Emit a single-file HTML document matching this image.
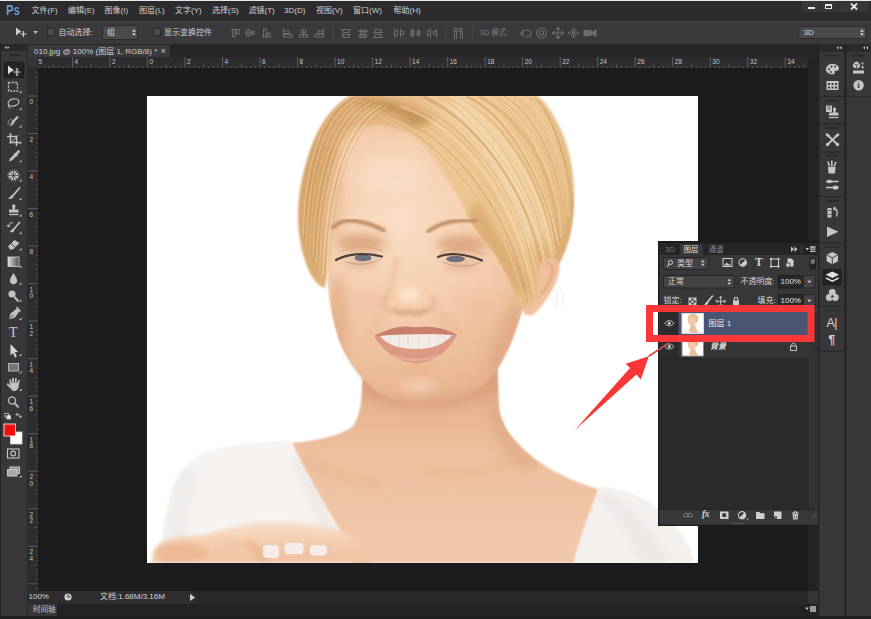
<!DOCTYPE html>
<html lang="zh">
<head>
<meta charset="utf-8">
<title>Photoshop</title>
<style>
html,body{margin:0;padding:0;background:#1c1b1e;}
body{width:871px;height:619px;position:relative;overflow:hidden;font-family:"Liberation Sans","Noto Sans CJK SC",sans-serif;font-size:8px;color:#d6d6d6;}
.abs{position:absolute;}
#menubar{left:0;top:0;width:871px;height:21px;background:#2c2b2d;}
#topline{left:0;top:0;width:871px;height:1px;background:#e9e9e9;}
#optbar{left:0;top:21px;width:871px;height:23px;background:#3a393b;border-top:1px solid #444345;box-sizing:border-box;}
#tools{left:0;top:44px;width:28px;height:575px;background:#38373a;}
#tabbar{left:28px;top:44px;width:790px;height:13px;background:#262527;}
#tab{left:28px;top:44.5px;width:142px;height:13px;background:#3a393b;}
#hruler{left:28px;top:57px;width:780px;height:11px;background:#2c2b2e;}
#vruler{left:28px;top:68px;width:10px;height:523px;background:#2c2b2e;}
#canvas{left:38px;top:68px;width:770px;height:523px;background:#1c1b1e;}
#vscroll{left:808px;top:57px;width:10px;height:534px;background:#232225;}
#status{left:28px;top:591px;width:780px;height:12px;background:#282729;}
#statusl{left:28px;top:591px;width:169px;height:12px;background:#2e2d30;}
#corner{left:808px;top:591px;width:10px;height:12px;background:#363537;}
#timeline{left:28px;top:603px;width:790px;height:13px;background:#232224;border-top:1px solid #2f2e30;box-sizing:border-box;}
#tltab{left:28px;top:603.5px;width:29px;height:12px;background:#363538;}
#bottom{left:0;top:615.5px;width:871px;height:3.5px;background:#1e1d1f;z-index:5;}
#dock1{left:818px;top:44px;width:28px;height:575px;background:#38373a;}
#dock2{left:846px;top:44px;width:25px;height:575px;background:#38373a;border-left:1px solid #29282a;box-sizing:border-box;}
#photo{left:147px;top:96px;width:551px;height:467px;background:#fff;overflow:hidden;}
#layers{left:658px;top:241px;width:160px;height:284px;background:#2c2b2e;border:1px solid #1a191b;box-sizing:border-box;}
.t{position:absolute;white-space:nowrap;line-height:1;}
.m{top:7px;font-size:8px;color:#d2d2d2;}
.o{top:7px;font-size:8px;color:#d2d2d2;}
.cb{width:8px;height:8px;background:#4d4c4f;border:1px solid #2a292b;box-sizing:border-box;border-radius:1px;}
.dd{background:#4a494c;border:1px solid #2a292b;box-sizing:border-box;border-radius:2px;}
</style>
</head>
<body>
<div class="abs" id="canvas"></div>
<div class="abs" id="photo">
<svg class="abs" style="left:0;top:0" width="551" height="467" viewBox="147 96 551 467">
<defs>
<filter id="b05" x="-10%" y="-10%" width="120%" height="120%"><feGaussianBlur stdDeviation="0.6"/></filter>
<filter id="b1" x="-10%" y="-10%" width="120%" height="120%"><feGaussianBlur stdDeviation="1.2"/></filter>
<filter id="b2" x="-20%" y="-20%" width="140%" height="140%"><feGaussianBlur stdDeviation="2"/></filter>
<filter id="b3" x="-20%" y="-20%" width="140%" height="140%"><feGaussianBlur stdDeviation="3.5"/></filter>
<filter id="b6" x="-30%" y="-30%" width="160%" height="160%"><feGaussianBlur stdDeviation="6"/></filter>
<filter id="b10" x="-50%" y="-50%" width="200%" height="200%"><feGaussianBlur stdDeviation="10"/></filter>
<linearGradient id="hairg" gradientUnits="userSpaceOnUse" x1="300" y1="150" x2="575" y2="230">
<stop offset="0" stop-color="#d5a26b"/><stop offset="0.14" stop-color="#dcad77"/><stop offset="0.45" stop-color="#ecc692"/><stop offset="0.75" stop-color="#ebc590"/><stop offset="1" stop-color="#e3b882"/>
</linearGradient>
<radialGradient id="faceg" gradientUnits="userSpaceOnUse" cx="400" cy="220" r="200">
<stop offset="0" stop-color="#fadec5"/><stop offset="0.5" stop-color="#f3ccac"/><stop offset="0.85" stop-color="#e9b793"/><stop offset="1" stop-color="#dfa680"/>
</radialGradient>
<linearGradient id="handg" gradientUnits="userSpaceOnUse" x1="0" y1="522" x2="0" y2="563">
<stop offset="0" stop-color="#f8e0cc"/><stop offset="0.45" stop-color="#f4ceb0"/><stop offset="1" stop-color="#efc2a1"/>
</linearGradient>
<linearGradient id="neckg" gradientUnits="userSpaceOnUse" x1="0" y1="380" x2="0" y2="563">
<stop offset="0" stop-color="#dda680"/><stop offset="0.15" stop-color="#e6b48f"/><stop offset="0.4" stop-color="#edc09f"/><stop offset="1" stop-color="#f1c9ab"/>
</linearGradient>
<path id="facep" d="M392 126 C380 123 362 124 352 130 C342 137 335 155 331 175 C326 205 324 245 327 270 C328 290 330 305 333 318 C337 338 344 354 353 367 C360 377 370 388 385 396 C400 403 420 405 440 403 C458 401 474 393 485 384 C494 376 502 362 508 350 C516 332 521 315 524 303 C528 285 530 262 527 245 L470 150 Z"/>
<clipPath id="facec"><use href="#facep"/></clipPath>
<path id="neckp" d="M363 368 C362 395 362 415 352 427 C338 437 312 441 292 443 C305 470 325 505 342 534 L353 563 L573 563 L580 540 C586 520 594 503 598 489 C580 484 552 472 535 459 C515 443 502 428 499 408 L497 362 Z"/>
<clipPath id="neckc"><use href="#neckp"/></clipPath>
<path id="hairback" d="M349 96 C333 106 321 122 313 142 C304 165 298 192 298 215 C298 240 304 262 311 275 C316 283 321 288 325 288 L340 190 L380 125 L430 170 L500 200 L520 290 C535 285 548 275 556 269 C566 254 574 230 574 200 C575 170 568 140 555 118 C550 108 544 101 538 96 Z"/>
<path id="sweep" d="M378 121 C390 124 405 130 419 141 C428 149 434 157 438 164 C445 176 450 183 454 189 C460 199 464 208 467 216 C476 232 486 243 495 254 C503 268 510 281 514 292 C516 300 518 307 523 309 C529 308 535 300 540 290 C546 279 550 270 554 260 C560 245 562 220 562 190 C562 150 550 115 530 96 L352 96 C362 104 370 114 378 121 Z"/>
<clipPath id="hairc"><use href="#hairback"/><use href="#sweep"/></clipPath>
</defs>
<rect x="147" y="96" width="551" height="467" fill="#ffffff"/>
<g filter="url(#b1)">
<path d="M290 441 C260 442 225 444 200 455 C178 466 168 495 163 530 L160 563 L360 563 L342 534 Z" fill="#f6f3f1"/>
<path d="M598 487 C620 486 645 497 662 512 C680 528 690 545 695 563 L570 563 L578 545 Z" fill="#f3f0ee"/>
</g>
<g filter="url(#b3)" opacity="0.7">
<path d="M600 492 C625 500 650 520 668 563 L640 563 C630 530 615 510 598 500 Z" fill="#e9e5e3"/>
<path d="M180 470 C170 500 166 530 165 563 L185 563 C185 530 190 500 200 470 Z" fill="#ebe8e6"/>
<path d="M300 455 C310 480 325 510 345 545 L335 550 C315 515 300 485 290 460 Z" fill="#e9e4e1"/>
</g>
<g filter="url(#b1)"><use href="#neckp" fill="url(#neckg)"/></g>
<g clip-path="url(#neckc)">
<g filter="url(#b6)">
<path d="M360 392 C390 414 450 418 505 386 L505 365 L360 365 Z" fill="#d99f79" opacity="0.8"/>
<path d="M500 400 C505 430 520 450 545 465 L520 470 C500 450 490 430 488 400 Z" fill="#dca37e" opacity="0.6"/>
<path d="M302 460 C322 472 348 481 384 485" stroke="#dba680" stroke-width="5" fill="none" opacity="0.55"/>
<path d="M420 470 C450 478 480 475 520 462" stroke="#e3ad89" stroke-width="6" fill="none" opacity="0.5"/>
</g>
</g>
<g filter="url(#b1)"><use href="#hairback" fill="url(#hairg)"/></g>
<path d="M520 262 C535 250 556 250 558 266 C559 282 548 300 536 312 C530 318 524 316 522 310 Z" fill="#f0c19e" filter="url(#b1)"/>
<path d="M543 262 C553 259 556 270 549 283 C546 290 542 294 538 297" stroke="#e5a47a" stroke-width="3" fill="none" filter="url(#b1)" opacity="0.8"/>
<g filter="url(#b1)"><use href="#facep" fill="url(#faceg)"/></g>
<g clip-path="url(#facec)">
<g filter="url(#b6)" opacity="0.55">
<ellipse cx="338" cy="320" rx="10" ry="45" fill="#dca079"/>
<ellipse cx="508" cy="335" rx="12" ry="40" fill="#dca079" transform="rotate(22 508 335)"/>
<ellipse cx="425" cy="404" rx="55" ry="7" fill="#dba07a"/>
<ellipse cx="362" cy="243" rx="26" ry="9" fill="#d9a07a"/>
<ellipse cx="462" cy="245" rx="26" ry="9" fill="#d9a07a"/>
<ellipse cx="335" cy="200" rx="8" ry="40" fill="#e3b088"/>
<ellipse cx="416" cy="371" rx="16" ry="4" fill="#d9a07c"/>
<path d="M385 308 C378 318 372 328 369 340" stroke="#d99f7a" stroke-width="4" fill="none"/>
<path d="M435 308 C444 317 454 326 461 338" stroke="#d99f7a" stroke-width="4" fill="none"/>
<ellipse cx="418" cy="386" rx="18" ry="7" fill="#fbe0c8"/>
<ellipse cx="392" cy="175" rx="36" ry="20" fill="#fbe1c9"/>
<ellipse cx="368" cy="300" rx="16" ry="12" fill="#efbe9f"/>
<ellipse cx="472" cy="305" rx="18" ry="12" fill="#efbe9f"/>
</g>
</g>
<g filter="url(#b3)" opacity="0.75"><path d="M326 262 C323 225 326 190 334 162 C340 142 350 128 366 124 C378 122 392 124 404 128" stroke="#e3ba86" stroke-width="7" fill="none"/></g>
<g filter="url(#b1)"><use href="#sweep" fill="url(#hairg)"/></g>
<g clip-path="url(#hairc)"><g filter="url(#b3)" opacity="0.55">
<path d="M467 216 C482 240 505 275 520 296 L530 285 C512 255 494 225 478 200 Z" fill="#cf9c5e"/>
<path d="M318 150 C308 180 304 215 310 255 L322 280 C318 240 322 190 340 150 Z" fill="#d2a064"/>
<path d="M540 262 C555 250 566 225 568 195 L576 200 C576 235 566 258 556 272 Z" fill="#d3a467"/>
</g>
<g filter="url(#b3)" opacity="0.8">
<path d="M352 106 C372 105 396 111 414 127 L434 121 C414 105 390 99 358 100 Z" fill="#bd8648"/>
</g>
<g filter="url(#b6)" opacity="0.45">
<path d="M440 105 C480 140 505 185 525 250 L548 235 C530 175 500 135 465 100 Z" fill="#fbecc9"/>
</g>
<g filter="url(#b05)" fill="none" stroke-linecap="round"><path d="M384.0 119.0C438.9 143.7 510.2 213.4 522.0 306.0" stroke="#f9e3bd" stroke-width="1.5" opacity="0.17"/><path d="M385.9 117.1C439.4 138.6 513.1 223.4 525.0 304.4" stroke="#cf9b5f" stroke-width="1.6" opacity="0.40"/><path d="M386.6 116.5C443.2 140.9 504.0 210.1 525.6 303.9" stroke="#f3d6a6" stroke-width="1.5" opacity="0.44"/><path d="M388.7 114.9C455.6 134.3 514.6 220.6 527.3 302.4" stroke="#c38f54" stroke-width="1.4" opacity="0.39"/><path d="M391.9 112.6C453.7 137.2 514.3 207.0 529.4 300.1" stroke="#f6dcb0" stroke-width="0.9" opacity="0.17"/><path d="M394.7 110.7C457.6 132.1 516.7 204.0 531.0 298.0" stroke="#d6a76c" stroke-width="1.6" opacity="0.24"/><path d="M400.5 106.8C462.4 125.4 517.2 201.6 534.0 293.9" stroke="#f9e3bd" stroke-width="2.4" opacity="0.37"/><path d="M400.8 106.6C467.1 123.4 519.0 195.3 534.1 293.7" stroke="#cf9b5f" stroke-width="1.1" opacity="0.30"/><path d="M402.4 105.6C463.4 132.0 518.2 191.2 534.9 292.6" stroke="#f3d6a6" stroke-width="1.4" opacity="0.36"/><path d="M408.4 101.9C466.4 123.6 518.5 185.4 537.5 288.4" stroke="#c38f54" stroke-width="1.7" opacity="0.35"/><path d="M408.5 101.8C468.4 126.4 516.9 188.5 537.5 288.4" stroke="#f6dcb0" stroke-width="1.3" opacity="0.27"/><path d="M415.0 97.0C462.9 118.9 528.4 202.3 540.1 283.9" stroke="#d6a76c" stroke-width="0.9" opacity="0.38"/><path d="M415.1 97.0C466.3 117.8 521.4 203.3 540.1 283.8" stroke="#f9e3bd" stroke-width="1.6" opacity="0.31"/><path d="M422.7 97.0C480.2 124.1 530.6 191.8 542.9 278.7" stroke="#cf9b5f" stroke-width="1.4" opacity="0.42"/><path d="M426.4 97.0C473.3 113.9 532.6 195.1 544.2 276.2" stroke="#f3d6a6" stroke-width="1.7" opacity="0.33"/><path d="M425.6 97.0C470.6 117.4 530.9 187.0 543.9 276.8" stroke="#c38f54" stroke-width="2.5" opacity="0.36"/><path d="M430.4 97.0C482.7 120.7 535.8 177.2 545.5 273.6" stroke="#f6dcb0" stroke-width="2.2" opacity="0.41"/><path d="M435.4 97.0C483.1 116.4 537.3 182.1 547.2 270.2" stroke="#d6a76c" stroke-width="0.9" opacity="0.17"/><path d="M435.2 97.0C479.9 115.6 537.7 197.5 547.1 270.3" stroke="#f9e3bd" stroke-width="1.1" opacity="0.18"/><path d="M439.6 97.0C481.3 122.6 534.4 192.3 548.5 267.4" stroke="#cf9b5f" stroke-width="1.3" opacity="0.25"/><path d="M443.0 97.0C485.0 121.9 532.5 183.6 549.5 265.2" stroke="#f3d6a6" stroke-width="1.7" opacity="0.18"/><path d="M444.8 97.0C489.1 113.9 534.7 190.1 550.1 264.0" stroke="#c38f54" stroke-width="0.8" opacity="0.44"/><path d="M450.9 97.0C491.1 117.1 543.6 179.4 551.9 259.9" stroke="#f6dcb0" stroke-width="2.6" opacity="0.41"/><path d="M455.5 97.0C495.7 114.5 544.1 172.5 553.2 256.9" stroke="#d6a76c" stroke-width="1.8" opacity="0.38"/><path d="M456.7 97.0C496.1 120.1 538.1 170.3 553.5 256.1" stroke="#f9e3bd" stroke-width="2.3" opacity="0.40"/><path d="M462.9 97.0C500.5 115.8 545.2 186.3 555.2 252.1" stroke="#cf9b5f" stroke-width="0.9" opacity="0.23"/><path d="M463.3 97.0C506.0 121.2 544.7 166.5 555.4 251.8" stroke="#f3d6a6" stroke-width="2.6" opacity="0.44"/><path d="M467.6 97.0C503.7 111.9 548.0 180.8 556.5 249.0" stroke="#c38f54" stroke-width="1.9" opacity="0.42"/><path d="M474.3 97.0C511.1 116.5 546.2 180.9 558.3 244.6" stroke="#f6dcb0" stroke-width="2.0" opacity="0.42"/><path d="M477.6 97.0C515.9 114.2 551.5 165.3 559.2 242.5" stroke="#d6a76c" stroke-width="1.4" opacity="0.39"/><path d="M482.5 97.0C515.8 113.0 548.3 165.1 560.4 239.3" stroke="#f9e3bd" stroke-width="1.1" opacity="0.19"/><path d="M480.7 97.0C519.4 117.7 552.7 163.6 560.0 240.5" stroke="#cf9b5f" stroke-width="2.6" opacity="0.35"/><path d="M485.7 97.0C519.4 109.7 555.1 159.3 561.2 237.2" stroke="#f3d6a6" stroke-width="2.0" opacity="0.31"/><path d="M493.3 97.0C523.5 117.3 552.9 171.5 563.1 232.3" stroke="#c38f54" stroke-width="1.3" opacity="0.24"/><path d="M492.4 97.0C524.1 110.7 554.9 173.3 562.9 232.9" stroke="#f6dcb0" stroke-width="2.4" opacity="0.26"/><path d="M497.6 97.0C527.5 117.2 556.6 156.9 564.2 229.6" stroke="#d6a76c" stroke-width="1.7" opacity="0.31"/><path d="M501.8 97.0C526.0 112.0 559.2 172.3 565.2 226.9" stroke="#f9e3bd" stroke-width="2.2" opacity="0.20"/><path d="M505.2 97.0C533.6 112.9 559.5 161.8 566.0 224.7" stroke="#cf9b5f" stroke-width="1.8" opacity="0.39"/><path d="M506.5 97.0C533.2 109.7 560.2 156.9 566.3 223.9" stroke="#f3d6a6" stroke-width="1.7" opacity="0.32"/><path d="M514.7 97.0C540.9 111.0 561.3 158.9 568.2 218.6" stroke="#c38f54" stroke-width="1.7" opacity="0.36"/><path d="M516.4 97.0C539.6 111.2 560.5 155.1 568.6 217.5" stroke="#f6dcb0" stroke-width="2.4" opacity="0.43"/><path d="M518.9 97.0C541.4 115.5 561.8 163.7 569.2 215.9" stroke="#d6a76c" stroke-width="1.0" opacity="0.28"/><path d="M521.5 97.0C541.2 107.1 563.3 152.1 569.8 214.3" stroke="#f9e3bd" stroke-width="2.4" opacity="0.20"/><path d="M529.8 97.0C549.0 107.2 565.3 146.8 571.6 209.0" stroke="#cf9b5f" stroke-width="1.2" opacity="0.44"/><path d="M531.4 97.0C549.2 114.7 566.0 158.8 572.0 207.9" stroke="#f3d6a6" stroke-width="1.6" opacity="0.30"/><path d="M534.9 97.0C550.2 108.5 567.5 159.8 572.8 205.7" stroke="#c38f54" stroke-width="1.8" opacity="0.28"/><path d="M388.0 108.0C352.0 125.7 331.0 187.6 328.0 285.0" stroke="#cf9b5f" stroke-width="1.0" opacity="0.28"/><path d="M385.6 107.3C350.0 124.7 329.3 185.7 326.3 281.7" stroke="#f3d6a6" stroke-width="1.6" opacity="0.33"/><path d="M383.2 106.5C348.1 123.7 327.6 183.8 324.7 278.3" stroke="#c38f54" stroke-width="1.1" opacity="0.45"/><path d="M380.8 105.8C346.1 122.7 325.9 181.9 323.0 275.0" stroke="#f6dcb0" stroke-width="1.8" opacity="0.44"/><path d="M378.4 105.1C344.2 121.7 324.2 180.0 321.3 271.7" stroke="#d6a76c" stroke-width="1.1" opacity="0.27"/><path d="M376.0 104.3C342.2 120.7 322.5 178.1 319.7 268.3" stroke="#f9e3bd" stroke-width="1.0" opacity="0.39"/><path d="M373.6 103.6C340.2 119.7 320.8 176.2 318.0 265.0" stroke="#cf9b5f" stroke-width="1.3" opacity="0.23"/><path d="M371.2 102.9C338.3 118.7 319.1 174.3 316.3 261.7" stroke="#f3d6a6" stroke-width="1.4" opacity="0.43"/><path d="M368.8 102.1C336.3 117.8 317.4 172.4 314.7 258.3" stroke="#c38f54" stroke-width="1.8" opacity="0.26"/><path d="M366.4 101.4C334.4 116.8 315.7 170.5 313.0 255.0" stroke="#f6dcb0" stroke-width="1.1" opacity="0.43"/><path d="M364.0 100.7C332.4 115.8 314.0 168.6 311.3 251.7" stroke="#d6a76c" stroke-width="1.6" opacity="0.38"/><path d="M361.6 99.9C330.4 114.8 312.3 166.7 309.7 248.3" stroke="#f9e3bd" stroke-width="1.1" opacity="0.21"/><path d="M359.2 99.2C328.5 113.8 310.6 164.8 308.0 245.0" stroke="#cf9b5f" stroke-width="1.7" opacity="0.31"/><path d="M356.8 98.5C326.5 112.8 308.9 162.9 306.3 241.7" stroke="#f3d6a6" stroke-width="1.1" opacity="0.43"/><path d="M354.4 97.7C324.6 111.8 307.2 161.0 304.7 238.3" stroke="#c38f54" stroke-width="1.6" opacity="0.40"/><path d="M352.0 97.0C322.6 110.8 305.4 159.1 303.0 235.0" stroke="#f6dcb0" stroke-width="1.1" opacity="0.41"/></g>
</g>
<g filter="url(#b1)"><path d="M540 264 C546 255 559 256 559 267 C559 279 551 291 542 299 C537 300 536 290 538 280 Z" fill="#f0bf9c"/><path d="M546 264 C553 262 555 270 550 280 C547 287 544 291 541 294" stroke="#e3a077" stroke-width="2.500" fill="none" opacity="0.800"/></g>
<g filter="url(#b05)" fill="none" stroke="#efe3d0" stroke-width="0.8" opacity="0.8"><path d="M556 282 C562 290 565 298 563 306"/><path d="M553 284 C558 293 559 302 556 309"/></g>
<g filter="url(#b3)" opacity="0.5"><ellipse cx="361" cy="243" rx="22" ry="7" fill="#d39a72"/><ellipse cx="461" cy="244" rx="22" ry="7" fill="#d39a72"/><ellipse cx="362" cy="264" rx="17" ry="3.500" fill="#c99274"/><ellipse cx="461" cy="266" rx="17" ry="3.500" fill="#c99274"/></g>
<g filter="url(#b1)" fill="none" stroke="#bf9066" stroke-linecap="round">
<path d="M333 227 C340 221 348 219.500 356 221 C366 222.500 376 226 384 230.500" stroke-width="4"/>
<path d="M428 231.500 C436 226 444 222.500 452 221.500 C460 220.500 468 220 476 220.500" stroke-width="3.800"/>
</g>
<g filter="url(#b05)" fill="none">
<path d="M341 252 C352 245.500 370 245.500 383 251.500" stroke="#d6a682" stroke-width="1"/>
<path d="M440 253 C452 247 470 247.500 484 255" stroke="#d6a682" stroke-width="1"/>
<ellipse cx="363" cy="258" rx="9" ry="3.300" fill="#6d6f7b"/>
<ellipse cx="455.500" cy="259" rx="9.500" ry="3.300" fill="#6d6f7b"/>
<path d="M347 259.500 C350 258 353 257.500 355 258 M371 258.500 C375 258 378 258 381 257.500" stroke="#d8ccc8" stroke-width="1.600"/>
<path d="M336 260 C346 254 364 252 382 256.500" stroke="#4d3d38" stroke-width="2.200" stroke-linecap="round"/>
<path d="M438 257 C448 252.500 464 253 482 260.500" stroke="#4d3d38" stroke-width="2.200" stroke-linecap="round"/>
<path d="M345 261.500 C355 265.500 370 265 381 259" stroke="#b98f76" stroke-width="0.900" opacity="0.800"/>
<path d="M443 262 C455 267.500 470 267.500 481 262" stroke="#b98f76" stroke-width="0.900" opacity="0.800"/>
</g>
<g filter="url(#b2)" fill="none">
<path d="M393 309 C399 315 405 313 410 312 C415 314 421 315 428 309" stroke="#c58a69" stroke-width="3" opacity="0.850"/>
<path d="M386 295 C381 302 384 309 391 311" stroke="#dba480" stroke-width="2.200" opacity="0.800"/>
<path d="M432 295 C437 302 434 309 427 311" stroke="#dba480" stroke-width="2.200" opacity="0.800"/>
<path d="M397 258 C393 278 389 290 386 300" stroke="#e5b593" stroke-width="4" opacity="0.600"/>
<ellipse cx="409" cy="295" rx="10" ry="8" fill="#fde8d3" opacity="0.700"/>
</g>
<g filter="url(#b05)">
<path d="M374 336 C388 329 402 325 410 327 C414 328 418 327 422 327 C436 326 448 330 457 335 C449 351 434 363 416 363 C398 363 383 351 374 336 Z" fill="#dc9a85"/>
<path d="M380 336 C395 334 435 334 452 335 C445 344 432 349 416 349 C400 349 387 345 380 336 Z" fill="#f4ece6"/>
<path d="M390 335V344M399 335V347M408 335V348.500M419 335V348.500M429 335V347.500M438 335V345M445 335V341" stroke="#e3d6cf" stroke-width="0.700" fill="none"/>
<path d="M374 336 C388 329 402 325 410 327 C414 328 418 327 422 327 C436 326 448 330 457 335 C440 333 392 334 374 336 Z" fill="#c8806c"/>
<path d="M392 356 C405 361 428 361 440 355" stroke="#e9b5a3" stroke-width="2.500" fill="none" opacity="0.700"/>
</g>
<g filter="url(#b2)">
<path d="M152 563 L154 550 C158 540 175 536 200 536 C215 533 235 525 257 522.500 C285 521 320 524 340 531 C358 538 368 550 374 563 Z" fill="url(#handg)"/>
<ellipse cx="182" cy="553" rx="27" ry="10" fill="#ecba96"/>
<path d="M250 540 C262 545 266 552 268 563 L258 563 C256 555 250 548 240 545 Z" fill="#e9b792" opacity="0.700"/>
<path d="M225 545 C240 538 250 545 262 560" stroke="#ecbd9c" stroke-width="3" fill="none" opacity="0.7"/>
<path d="M282 540V563M307 540V563M330 542V563" stroke="#eab997" stroke-width="2" opacity="0.6"/>
</g>
<g filter="url(#b05)" fill="#f8ecea">
<rect x="263" y="545" width="16" height="13" rx="4"/>
<rect x="284.500" y="543" width="19" height="11" rx="4"/>
<rect x="310" y="545" width="17" height="10.500" rx="4"/>
</g>
</svg>
</div>
<div class="abs" id="tabbar"></div>
<div class="abs" id="tab"><span class="t" style="left:6px;top:3px;font-size:8px;color:#d0d0d0;">010.jpg @ 100% (图层 1, RGB/8) *</span><span class="t" style="left:132.5px;top:1.5px;font-size:9.5px;color:#d0d0d0;">×</span></div>
<svg class="abs" id="hruler" width="780" height="11" viewBox="28 57 780 11" style="left:28px;top:57px;"><rect x="28" y="57" width="780" height="11" fill="#2d2c2f"/><rect x="28" y="57" width="10" height="11" fill="#353437"/><path d="M39.6 66V68M44.3 66V68M49.0 66V68M58.4 66V68M63.1 66V68M67.8 66V68M77.1 66V68M81.8 66V68M86.5 66V68M95.9 66V68M100.6 66V68M105.3 66V68M114.7 66V68M119.4 66V68M124.0 66V68M133.4 66V68M138.1 66V68M142.8 66V68M152.2 66V68M156.9 66V68M161.6 66V68M170.9 66V68M175.6 66V68M180.3 66V68M189.7 66V68M194.4 66V68M199.1 66V68M208.5 66V68M213.2 66V68M217.9 66V68M227.2 66V68M231.9 66V68M236.6 66V68M246.0 66V68M250.7 66V68M255.4 66V68M264.8 66V68M269.4 66V68M274.1 66V68M283.5 66V68M288.2 66V68M292.9 66V68M302.3 66V68M307.0 66V68M311.6 66V68M321.0 66V68M325.7 66V68M330.4 66V68M339.8 66V68M344.5 66V68M349.2 66V68M358.6 66V68M363.2 66V68M367.9 66V68M377.3 66V68M382.0 66V68M386.7 66V68M396.1 66V68M400.8 66V68M405.5 66V68M414.8 66V68M419.5 66V68M424.2 66V68M433.6 66V68M438.3 66V68M443.0 66V68M452.4 66V68M457.0 66V68M461.7 66V68M471.1 66V68M475.8 66V68M480.5 66V68M489.9 66V68M494.6 66V68M499.3 66V68M508.6 66V68M513.3 66V68M518.0 66V68M527.4 66V68M532.1 66V68M536.8 66V68M546.2 66V68M550.8 66V68M555.5 66V68M564.9 66V68M569.6 66V68M574.3 66V68M583.7 66V68M588.4 66V68M593.0 66V68M602.4 66V68M607.1 66V68M611.8 66V68M621.2 66V68M625.9 66V68M630.6 66V68M640.0 66V68M644.6 66V68M649.3 66V68M658.7 66V68M663.4 66V68M668.1 66V68M677.5 66V68M682.2 66V68M686.9 66V68M696.2 66V68M700.9 66V68M705.6 66V68M715.0 66V68M719.7 66V68M724.4 66V68M733.8 66V68M738.4 66V68M743.1 66V68M752.5 66V68M757.2 66V68M761.9 66V68M771.3 66V68M776.0 66V68M780.7 66V68M790.0 66V68M794.7 66V68M799.4 66V68" stroke="#68676b" stroke-width="0.8" fill="none"/><path d="M53.7 64.5V68M91.2 64.5V68M128.7 64.5V68M166.3 64.5V68M203.8 64.5V68M241.3 64.5V68M278.8 64.5V68M316.3 64.5V68M353.9 64.5V68M391.4 64.5V68M428.9 64.5V68M466.4 64.5V68M503.9 64.5V68M541.5 64.5V68M579.0 64.5V68M616.5 64.5V68M654.0 64.5V68M691.5 64.5V68M729.1 64.5V68M766.6 64.5V68M804.1 64.5V68" stroke="#68676b" stroke-width="0.8" fill="none"/><path d="M72.5 57V68M110.0 57V68M147.5 57V68M185.0 57V68M222.5 57V68M260.1 57V68M297.6 57V68M335.1 57V68M372.6 57V68M410.1 57V68M447.7 57V68M485.2 57V68M522.7 57V68M560.2 57V68M597.7 57V68M635.3 57V68M672.8 57V68M710.3 57V68M747.8 57V68M785.3 57V68" stroke="#6a696d" stroke-width="0.8" fill="none"/><g font-family="Liberation Sans, sans-serif" font-size="6.5" fill="#c4c4c4"><text x="38.5" y="64">5</text><text x="74.5" y="64">4</text><text x="112.0" y="64">2</text><text x="149.5" y="64">0</text><text x="187.0" y="64">2</text><text x="224.5" y="64">4</text><text x="262.1" y="64">6</text><text x="299.6" y="64">8</text><text x="337.1" y="64">10</text><text x="374.6" y="64">12</text><text x="412.1" y="64">14</text><text x="449.7" y="64">16</text><text x="487.2" y="64">18</text><text x="524.7" y="64">20</text><text x="562.2" y="64">22</text><text x="599.7" y="64">24</text><text x="637.3" y="64">26</text><text x="674.8" y="64">28</text><text x="712.3" y="64">30</text><text x="749.8" y="64">32</text><text x="787.3" y="64">34</text></g></svg>
<svg class="abs" id="vruler" width="10" height="523" viewBox="28 68 10 523" style="left:28px;top:68px;"><rect x="28" y="68" width="10" height="523" fill="#2d2c2f"/><path d="M36 72.5H38M36 81.9H38M36 86.6H38M36 91.3H38M36 100.7H38M36 105.4H38M36 110.1H38M36 119.5H38M36 124.1H38M36 128.8H38M36 138.2H38M36 142.9H38M36 147.6H38M36 157.0H38M36 161.7H38M36 166.4H38M36 175.7H38M36 180.4H38M36 185.1H38M36 194.5H38M36 199.2H38M36 203.9H38M36 213.2H38M36 217.9H38M36 222.6H38M36 232.0H38M36 236.7H38M36 241.4H38M36 250.8H38M36 255.5H38M36 260.1H38M36 269.5H38M36 274.2H38M36 278.9H38M36 288.3H38M36 293.0H38M36 297.7H38M36 307.1H38M36 311.7H38M36 316.4H38M36 325.8H38M36 330.5H38M36 335.2H38M36 344.6H38M36 349.3H38M36 354.0H38M36 363.3H38M36 368.0H38M36 372.7H38M36 382.1H38M36 386.8H38M36 391.5H38M36 400.9H38M36 405.5H38M36 410.2H38M36 419.6H38M36 424.3H38M36 429.0H38M36 438.4H38M36 443.1H38M36 447.8H38M36 457.1H38M36 461.8H38M36 466.5H38M36 475.9H38M36 480.6H38M36 485.3H38M36 494.7H38M36 499.3H38M36 504.0H38M36 513.4H38M36 518.1H38M36 522.8H38M36 532.2H38M36 536.9H38M36 541.5H38M36 550.9H38M36 555.6H38M36 560.3H38M36 569.7H38M36 574.4H38M36 579.1H38M36 588.5H38" stroke="#555458" stroke-width="0.8" fill="none"/><path d="M34.5 77.2H38M34.5 114.8H38M34.5 152.3H38M34.5 189.8H38M34.5 227.3H38M34.5 264.8H38M34.5 302.4H38M34.5 339.9H38M34.5 377.4H38M34.5 414.9H38M34.5 452.4H38M34.5 490.0H38M34.5 527.5H38M34.5 565.0H38" stroke="#555458" stroke-width="0.8" fill="none"/><path d="M28 96.0H38M28 133.5H38M28 171.0H38M28 208.6H38M28 246.1H38M28 283.6H38M28 321.1H38M28 358.6H38M28 396.2H38M28 433.7H38M28 471.2H38M28 508.7H38M28 546.2H38M28 583.8H38" stroke="#6a696d" stroke-width="0.8" fill="none"/><g font-family="Liberation Sans, sans-serif" font-size="6.5" fill="#c4c4c4"><text x="29.500" y="104.0">0</text><text x="29.500" y="141.5">2</text><text x="29.500" y="179.0">4</text><text x="29.500" y="216.6">6</text><text x="29.500" y="254.1">8</text><text x="29.500" y="291.6">1</text><text x="29.500" y="298.1">0</text><text x="29.500" y="329.1">1</text><text x="29.500" y="335.6">2</text><text x="29.500" y="366.6">1</text><text x="29.500" y="373.1">4</text><text x="29.500" y="404.2">1</text><text x="29.500" y="410.7">6</text><text x="29.500" y="441.7">1</text><text x="29.500" y="448.2">8</text><text x="29.500" y="479.2">2</text><text x="29.500" y="485.7">0</text><text x="29.500" y="516.7">2</text><text x="29.500" y="523.2">2</text><text x="29.500" y="554.2">2</text><text x="29.500" y="560.7">4</text></g></svg>
<div class="abs" id="vscroll"></div>
<div class="abs" id="status"></div>
<div class="abs" id="statusl"><span class="t" style="left:0.5px;top:2px;font-size:8px;color:#d6d6d6;">100%</span><svg class="abs" style="left:36px;top:2px" width="8" height="8" viewBox="0 0 8 8"><circle cx="4" cy="4" r="3.6" fill="#c9c9c9"/><path d="M4 4V1.500M4 4H6" stroke="#3a393b" stroke-width="1" fill="none"/></svg><span class="t" style="left:72px;top:2px;font-size:8px;color:#d6d6d6;">文档:1.68M/3.16M</span><svg class="abs" style="left:162px;top:2.500px" width="5" height="7" viewBox="0 0 5 7"><path d="M0 0L5 3.500L0 7Z" fill="#d0d0d0"/></svg></div>
<div class="abs" id="corner"></div>
<div class="abs" id="timeline"></div>
<div class="abs" id="tltab"><span class="t" style="left:5px;top:2px;font-size:7.5px;color:#c8c8c8;">时间轴</span></div>
<svg class="abs" style="left:805px;top:606px" width="12" height="6" viewBox="0 0 12 6"><path d="M0 1.500L4 1.500L2 4Z" fill="#bdbdbd"/><rect x="5" y="0" width="6" height="6" fill="#9c9c9c"/></svg>
<div class="abs" id="bottom"></div>
<div class="abs" id="menubar">
<span class="t" style="left:5.5px;top:2.5px;font-size:14.5px;font-weight:bold;color:#6f9bd3;transform:scaleX(0.78);transform-origin:0 0;">Ps</span>
<span class="t m" style="left:31.5px;">文件(F)</span>
<span class="t m" style="left:68px;">编辑(E)</span>
<span class="t m" style="left:104.5px;">图像(I)</span>
<span class="t m" style="left:139px;">图层(L)</span>
<span class="t m" style="left:175px;">文字(Y)</span>
<span class="t m" style="left:212px;">选择(S)</span>
<span class="t m" style="left:248.5px;">滤镜(T)</span>
<span class="t m" style="left:284px;">3D(D)</span>
<span class="t m" style="left:316px;">视图(V)</span>
<span class="t m" style="left:353px;">窗口(W)</span>
<span class="t m" style="left:393.5px;">帮助(H)</span>
<div class="abs" style="left:801.5px;top:1px;width:67.5px;height:10.5px;background:#373638;border-radius:0 0 2px 2px;"></div>
<div class="abs" style="left:819.5px;top:1px;width:1px;height:10.5px;background:#2b2a2c;"></div>
<div class="abs" style="left:837.5px;top:1px;width:1px;height:10.5px;background:#2b2a2c;"></div>
<div class="abs" style="left:807.5px;top:6.5px;width:7px;height:2.7px;background:#e8e8e8;"></div>
<div class="abs" style="left:825px;top:3.7px;width:7px;height:5.3px;border:1.2px solid #e8e8e8;border-top-width:2px;box-sizing:border-box;"></div>
<svg class="abs" style="left:849.5px;top:3.2px" width="8" height="7" viewBox="0 0 8 7"><path d="M1 0.500 L7 6.500 M7 0.500 L1 6.500" stroke="#e8e8e8" stroke-width="1.800"/></svg>
</div>
<div class="abs" id="optbar">
<svg class="abs" style="left:15px;top:5px" width="13" height="11" viewBox="0 0 13 11"><path d="M1 0.5 L1 8.5 L3.2 6.5 L6.5 4.8 Z" fill="#cfcfcf"/><path d="M8.5 4 L8.5 10 M5.5 7 L11.5 7" stroke="#cfcfcf" stroke-width="1.2"/></svg>
<svg class="abs" style="left:33px;top:9px" width="5" height="3" viewBox="0 0 5 3"><path d="M0 0 L5 0 L2.5 3 Z" fill="#bdbdbd"/></svg>
<div class="abs cb" style="left:46.5px;top:6px;"></div>
<span class="t o" style="left:58.5px;">自动选择:</span>
<div class="abs dd" style="left:102px;top:3px;width:36px;height:15px;"></div>
<span class="t o" style="left:107px;">组</span>
<svg class="abs" style="left:132px;top:7px" width="4" height="7" viewBox="0 0 4 7"><path d="M0 2.8 L4 2.8 L2 0 Z M0 4.2 L4 4.2 L2 7 Z" fill="#c8c8c8"/></svg>
<div class="abs cb" style="left:152.5px;top:6px;"></div>
<span class="t o" style="left:164px;">显示变换控件</span>
<svg class="abs" style="left:225px;top:3px" width="380" height="16" viewBox="225 24 380 16" fill="none" stroke="#6d6c6f" stroke-width="1.1">
<!-- align icons -->
<path d="M231 28.5h9M232.5 29v7h2.5v-7M236.5 29v4h2.5v-4"/>
<path d="M245 32h10M246.500 29v6h3v-6zM251.5 30.500v3h2.500v-3z"/>
<path d="M262 36h9M263.500 36v-8h2.500v8M267.500 36v-4h2.500v4"/>
<path d="M283.500 27.500v9M284 30h5v2.500h-5M284 33.500h8v2.500h-8"/>
<path d="M303.500 27.500v9M301 29h5v2.500h-5zM299.500 33.500h8v2.500h-8z"/>
<path d="M323.500 27.500v9M323 30h-5v2.500h5M323 33.500h-8v2.500h8"/>
<path d="M332.500 26v12" stroke="#4a494c"/>
<path d="M341 28.500h10M343 29v2.500h6v-2.500M341 33.500h10M343 34v2.500h6v-2.500"/>
<path d="M358 30.500h10M360 29h6v3h-6zM358 35h10M360 33.500h6v3h-6z"/>
<path d="M373 31.500h10M375 31v-2.500h6v2.500M373 36.500h10M375 36v-2.500h6v2.500"/>
<path d="M394.500 27.500v9M395 29.500h2.500v5h-2.500M400.500 27.500v9M401 30.500h2.500v3h-2.500"/>
<path d="M412.500 27.500v9M411 29.500h3v5h-3zM418.500 27.500v9M417 30.500h3v3h-3z"/>
<path d="M430.500 27.500v9M430 29.500h-2.500v5h2.500M436.500 27.500v9M436 30.500h-2.500v3h2.500"/>
<path d="M446 26v12M473 26v12" stroke="#4a494c"/>
<path d="M454 27.500h3v3h-3zM459 27.500h3v3h-3zM454.500 31v7M460.500 31v7M456.500 31v7M462.500 31v7" stroke-width="1"/>
<!-- 3D icons -->
<path d="M521 33c0-2 2-4 5-4s5 1.500 5 3.500-2 3.500-5 3.500M524 31l-3 2.500 3.500 2"/>
<circle cx="541.500" cy="32" r="5"/><circle cx="541.500" cy="32" r="2.200"/>
<path d="M558 26.500v11M552.500 32h11M556 28.500l2-2 2 2M556 35.500l2 2 2-2M554.500 30l-2 2 2 2M561.500 30l2 2-2 2"/>
<path d="M573.500 27v10M568 32h11M571.500 29l2-2 2 2M571.500 35l2 2 2-2M570 30l-2 2 2 2M577 30l2 2-2 2M570.500 29l6 6M576.500 29l-6 6" stroke-width="0.9"/>
<path d="M584 29.500h7v5h-7zM591 32l5-3v6z" fill="#6d6c6f"/>
</svg>
<span class="t o" style="left:479.500px;color:#7d7c7f;font-size:7.600px;">3D 模式:</span>
<div class="abs dd" style="left:798px;top:4px;width:69px;height:13px;"></div>
<span class="t o" style="left:803.5px;">3D</span>
<svg class="abs" style="left:860px;top:7px" width="4" height="7" viewBox="0 0 4 7"><path d="M0 2.800 L4 2.800 L2 0 Z M0 4.200 L4 4.200 L2 7 Z" fill="#c8c8c8"/></svg>
</div>
<div class="abs" id="topline"></div>
<div class="abs" id="tools"></div>
<svg class="abs" style="left:0;top:44px" width="28" height="575" viewBox="0 44 28 575" fill="none" stroke="#c2c2c2" stroke-width="1.2"><rect x="0" y="44" width="1" height="575" fill="#232224" stroke="none"/><rect x="27" y="44" width="1" height="575" fill="#29282a" stroke="none"/><rect x="1" y="44" width="26" height="7" fill="#29282a" stroke="none"/><path d="M5 46L7 47.500L5 49ZM7.500 46L9.500 47.500L7.500 49Z" fill="#c2c2c2" stroke="none"/><path d="M9 55H20" stroke="#28272a" stroke-width="1.500"/><rect x="4" y="62" width="20" height="16" rx="1.5" fill="#232224" stroke="#1c1b1d" stroke-width="0.6"/><path d="M8 65.500V74.500L10.200 72.500L13.800 70.300Z" fill="#dcdcdc" stroke="none"/><path d="M17 68.500V75.500M13.500 72H20.500" stroke="#dcdcdc" stroke-width="1.1"/><path d="M15.800 69.700L17 68.300L18.200 69.700M15.800 74.300L17 75.700L18.200 74.300" stroke="#dcdcdc" stroke-width="0.8"/><rect x="8.500" y="82.500" width="9" height="8.500" stroke-dasharray="2 1.300" stroke-width="1.300"/><path d="M21.500 90.5L21.500 93.0L19 93.0Z" fill="#bdbdbd" stroke="none"/><ellipse cx="13.500" cy="102.500" rx="5.500" ry="3.500" transform="rotate(-15 13.500 102.500)"/><path d="M9 105C8 106.500 9 108 10.500 108.500" stroke-width="1"/><path d="M21.500 107.5L21.500 110.0L19 110.0Z" fill="#bdbdbd" stroke="none"/><ellipse cx="11" cy="122.500" rx="3" ry="2.800" stroke-dasharray="1.500 1" stroke-width="1"/><path d="M12 123L18 116.500" stroke-width="2.200"/><path d="M12.500 122.500L11 125" stroke-width="1.500"/><path d="M21.500 124.9L21.500 127.4L19 127.4Z" fill="#bdbdbd" stroke="none"/><path d="M10.500 133V142.500H20M7 136.500H16.500V146" stroke-width="1.500"/><path d="M9.500 144L18.500 135" stroke-width="0.900"/><path d="M21.500 141.3L21.500 143.8L19 143.8Z" fill="#bdbdbd" stroke="none"/><path d="M9 161.500L10 158.500L15 153.500L17 155.500L12 160.500Z" fill="#c2c2c2" stroke="none"/><path d="M14.500 153L17.500 156" stroke-width="1.500"/><path d="M16 154.500L18.500 151.500" stroke-width="2.600" stroke-linecap="round"/><path d="M21.500 159.7L21.500 162.2L19 162.2Z" fill="#bdbdbd" stroke="none"/><ellipse cx="13.500" cy="175.500" rx="5" ry="4.600" fill="#c2c2c2" stroke="none"/><path d="M8 175.500H19M13.500 170.500V180.500M10 172L17 179M17 172L10 179" stroke="#38373a" stroke-width="0.700"/><circle cx="13.500" cy="175.500" r="5.600" stroke-dasharray="1 1" stroke-width="0.800"/><path d="M21.500 179.1L21.500 181.6L19 181.6Z" fill="#bdbdbd" stroke="none"/><path d="M19.500 188L13 195.500" stroke-width="1.800" stroke-linecap="round"/><path d="M12.500 195C10.500 195 10.500 197.500 8 198.500C10.500 199.500 13.500 198.500 13.500 196Z" fill="#c2c2c2" stroke="none"/><path d="M21.500 197.5L21.500 200.0L19 200.0Z" fill="#bdbdbd" stroke="none"/><path d="M12 205.500C12 204 15.500 204 15.500 205.500C15.500 207 14.800 208 14.800 209.500H18.500V212.500H9V209.500H12.700C12.700 208 12 207 12 205.500Z" fill="#c2c2c2" stroke="none"/><path d="M9 214.500H18.500" stroke-width="1.300"/><path d="M21.500 214.0L21.500 216.5L19 216.5Z" fill="#bdbdbd" stroke="none"/><path d="M19.500 222.500L14 229" stroke-width="1.700" stroke-linecap="round"/><path d="M13.500 228.500C11.500 228.500 11.500 231 9.500 232C11.500 233 14.500 232 14.500 229.500Z" fill="#c2c2c2" stroke="none"/><path d="M8.500 227C8.500 224 10.500 222.500 13 222.500M8.500 227L7 225M8.500 227L10.500 225.500" stroke-width="1"/><path d="M21.500 231.5L21.500 234.0L19 234.0Z" fill="#bdbdbd" stroke="none"/><path d="M8 246.500L14.500 240L19.500 243L13 249.500H10Z" fill="#c2c2c2" stroke="none"/><path d="M11 243.500L15.500 247.500" stroke="#38373a" stroke-width="0.900"/><path d="M21.500 247.9L21.500 250.4L19 250.4Z" fill="#bdbdbd" stroke="none"/><defs><linearGradient id="tg" x1="0" y1="0" x2="1" y2="0"><stop offset="0" stop-color="#e0e0e0"/><stop offset="1" stop-color="#4a494c"/></linearGradient></defs><rect x="8" y="257" width="11" height="9.500" fill="url(#tg)" stroke="#c9c9c9" stroke-width="0.900"/><path d="M21.500 265.3L21.500 267.8L19 267.8Z" fill="#bdbdbd" stroke="none"/><path d="M13.500 273C13.500 273 9.800 278.500 9.800 280.800C9.800 283 11.500 284.300 13.500 284.300C15.500 284.300 17.200 283 17.200 280.800C17.200 278.500 13.500 273 13.500 273Z" fill="#c2c2c2" stroke="none"/><path d="M21.500 282.2L21.500 284.7L19 284.7Z" fill="#bdbdbd" stroke="none"/><circle cx="12" cy="294" r="3.600" fill="#c2c2c2" stroke="none"/><path d="M14.500 297L18.500 301.500" stroke-width="2"/><path d="M21.500 299.2L21.500 301.7L19 301.7Z" fill="#bdbdbd" stroke="none"/><path d="M17.500 308L19.500 311L15 317.500L9 319.500L10.500 313.500Z" fill="#c2c2c2" stroke="none"/><path d="M9 319.500L13.500 314.500" stroke="#38373a" stroke-width="0.800"/><path d="M16.500 307L20.500 311.500" stroke-width="1.400"/><path d="M21.500 317.5L21.500 320.0L19 320.0Z" fill="#bdbdbd" stroke="none"/></svg>
<span class="t" style="left:9px;top:325.500px;font-family:'Liberation Serif',serif;font-size:14px;color:#c8c8c8;">T</span>
<svg class="abs" style="left:0;top:340px" width="28" height="150" viewBox="0 340 28 150" fill="none" stroke="#c9c9c9" stroke-width="1.200"><path d="M21.500 336.0L21.500 338.5L19 338.5Z" fill="#bdbdbd" stroke="none"/><path d="M10.500 344V355.500L13 353L15 357.500L16.800 356.700L14.800 352.300L18 352Z" fill="#d4d4d4" stroke="none"/><path d="M21.500 353.5L21.500 356.0L19 356.0Z" fill="#bdbdbd" stroke="none"/><rect x="8.500" y="363.500" width="10" height="7.500" fill="#77767a" stroke="#b5b5b5" stroke-width="1"/><path d="M21.500 370.8L21.500 373.3L19 373.3Z" fill="#bdbdbd" stroke="none"/><path d="M9.800 383C9.800 388 11.200 391 14 391C17 391 18.800 388.500 18.800 385.500V383Z" fill="#c2c2c2" stroke="none"/><path d="M10.700 384L10.200 380.200M13.100 384L12.900 378.600M15.600 384L15.900 378.900M17.900 384.500L18.900 380.800M10 387L7.600 384.200" stroke="#c2c2c2" stroke-width="1.800" stroke-linecap="round"/><path d="M21.500 388.5L21.500 391.0L19 391.0Z" fill="#bdbdbd" stroke="none"/><circle cx="12" cy="400.500" r="3.500" stroke="#b0b0b0" stroke-width="1.500"/><path d="M14.800 403.300L18.500 407.500" stroke="#b0b0b0" stroke-width="2.200"/><rect x="5" y="413.500" width="3.500" height="3.500" fill="#1a1a1a" stroke="#d0d0d0" stroke-width="0.800"/><rect x="7" y="415.500" width="3.500" height="3.500" fill="#e8e8e8" stroke="#d0d0d0" stroke-width="0.800"/><path d="M16 414.500C18.500 413.500 20.500 415 20.500 417.500M16 414.500L17.500 413M16 414.500L17.500 416M20.500 417.500L19 416.300M20.500 417.500L21.800 416" stroke-width="0.900"/><rect x="10.500" y="432" width="11.500" height="12" fill="#ffffff" stroke="#d8d8d8" stroke-width="0.800"/><rect x="4" y="424" width="11.500" height="12" fill="#f40f0f" stroke="#e8e8e8" stroke-width="0.900"/><rect x="7.500" y="449" width="11.500" height="9" stroke-width="1.100"/><circle cx="13.200" cy="453.500" r="2.400" stroke-width="1.100"/><rect x="10" y="467" width="9.500" height="6.500" fill="#8d8c8f" stroke-width="1"/><rect x="7.500" y="469.500" width="9.500" height="6.500" fill="#a9a8ab" stroke-width="1"/><path d="M21.500 475L21.500 477.500L19 477.500Z" fill="#bdbdbd" stroke="none"/></svg>
<div class="abs" id="dock1"></div>
<div class="abs" id="dock2"></div>
<svg class="abs" style="left:818px;top:44px" width="53" height="575" viewBox="818 44 53 575" fill="none" stroke="#c6c6c6" stroke-width="1.1"><rect x="818" y="44" width="53" height="575" fill="#252426" stroke="none"/><rect x="819.500" y="51.500" width="24.500" height="567.500" fill="#38373a" stroke="none"/><rect x="846.500" y="51.500" width="24.500" height="567.500" fill="#38373a" stroke="none"/><rect x="819.500" y="44" width="24.500" height="7.500" fill="#2a292b" stroke="none"/><rect x="846.500" y="44" width="24.500" height="7.500" fill="#2a292b" stroke="none"/><path d="M838.500 46L836.500 47.700L838.500 49.400ZM841.500 46L839.500 47.700L841.500 49.400ZM865 46L863 47.700L865 49.400ZM868 46L866 47.700L868 49.400Z" fill="#c4c4c4" stroke="none"/><path d="M819.500 96.5H844" stroke="#29282a" stroke-width="1.200"/><path d="M819.500 124H844" stroke="#29282a" stroke-width="1.200"/><path d="M819.500 152H844" stroke="#29282a" stroke-width="1.200"/><path d="M819.500 196.5H844" stroke="#29282a" stroke-width="1.200"/><path d="M819.500 243H844" stroke="#29282a" stroke-width="1.200"/><path d="M819.500 306.5H844" stroke="#29282a" stroke-width="1.200"/><path d="M819.500 351.5H844" stroke="#29282a" stroke-width="1.200"/><path d="M846.500 96.500H871" stroke="#29282a" stroke-width="1.200"/><path d="M825.500 55.5H838.500" stroke="#28272a" stroke-width="1.500"/><path d="M825.500 100.5H838.500" stroke="#28272a" stroke-width="1.500"/><path d="M825.500 128H838.500" stroke="#28272a" stroke-width="1.500"/><path d="M825.500 155.5H838.500" stroke="#28272a" stroke-width="1.500"/><path d="M825.500 201H838.500" stroke="#28272a" stroke-width="1.500"/><path d="M825.500 247H838.500" stroke="#28272a" stroke-width="1.500"/><path d="M825.500 310.5H838.500" stroke="#28272a" stroke-width="1.500"/><path d="M852 55.500H865" stroke="#28272a" stroke-width="1.500"/><path d="M826 69.500C826 66 829 64 832.500 64C836.500 64 839 66 839 68.500C839 70.500 837 70.800 835.800 70.800C834.500 70.800 834.300 72 834.800 72.800C835.200 73.800 834 74.300 832.500 74.300C829 74.300 826 72.500 826 69.500Z" fill="#c6c6c6" stroke="none"/><circle cx="829" cy="69" r="1" fill="#38373a" stroke="none"/><circle cx="831.500" cy="66.500" r="1" fill="#38373a" stroke="none"/><circle cx="835" cy="66.500" r="1" fill="#38373a" stroke="none"/><circle cx="830.800" cy="72" r="1" fill="#38373a" stroke="none"/><rect x="826.500" y="81" width="12" height="9" fill="#c6c6c6" stroke="none"/><path d="M828 83h2v2h-2zM831.500 83h2v2h-2zM835 83h2v2h-2zM828 86.500h2v2h-2zM831.500 86.500h2v2h-2zM835 86.500h2v2h-2z" fill="#38373a" stroke="none"/><rect x="826" y="105.500" width="6" height="6.500" fill="#c6c6c6" stroke="none"/><path d="M827.500 107h3M827.500 109h3" stroke="#38373a" stroke-width="0.800"/><path d="M833 108.500C833 107 836 107 836 108.500C836 110 835.500 111 835.500 112.500H838.500V115.500H829V112.500H833.500C833.500 111 833 110 833 108.500Z" fill="#c6c6c6" stroke="none"/><path d="M829 117.500H838.500" stroke-width="1.200"/><path d="M827.500 135L837.500 144.500M837.500 135L827.500 144.500" stroke-width="1.800"/><circle cx="827.500" cy="144.500" r="1.700" fill="#c6c6c6" stroke="none"/><circle cx="837.500" cy="144.500" r="1.700" fill="#c6c6c6" stroke="none"/><path d="M826 134L829.500 136.500M839 134L835.500 136.500" stroke-width="2.200"/><path d="M828 167H835.500L835 173.500H828.500Z" fill="#c6c6c6" stroke="none"/><path d="M829.500 166.500L828 161.500M831.800 166.500V160.500M834 166.500L836 162" stroke-width="1.600"/><path d="M826 181.500H838.500M826 187.500H838.500" stroke-width="1.300"/><ellipse cx="829.500" cy="181.500" rx="2.800" ry="1.800" fill="#c6c6c6" stroke="none"/><ellipse cx="835.500" cy="187.500" rx="2.800" ry="2" fill="#c6c6c6" stroke="none"/><rect x="827.500" y="208" width="4" height="9.500" fill="#c6c6c6" stroke="none"/><path d="M828.500 210.500h2M828.500 214.500h2" stroke="#38373a" stroke-width="1"/><path d="M833.500 208.500C837 208.500 838 212 836.500 216.500M833.500 208.500L835.300 207M833.500 208.500L835.300 210.300" stroke-width="1.300"/><path d="M827 226.500L838.500 231.700L827 237Z" fill="#c6c6c6" stroke="none"/><path d="M832.300 252L838 254.800V261.200L832.300 264.200L826.600 261.200V254.800Z" fill="#c6c6c6" stroke="none"/><path d="M826.600 254.800L832.300 257.800L838 254.800M832.300 257.800V264.200" stroke="#38373a" stroke-width="0.900"/><rect x="822.500" y="269.500" width="19" height="15.500" rx="1.500" fill="#232224" stroke="#1c1b1d" stroke-width="0.600"/><path d="M832.300 271.500L839 274.800L832.300 278L825.600 274.800Z" fill="#e2e2e2" stroke="none"/><path d="M826 278L832.300 281.200L838.600 278" stroke="#e2e2e2" stroke-width="1.500"/><circle cx="832.300" cy="292.500" r="3.400" fill="#c6c6c6" stroke="none"/><circle cx="829.300" cy="297.500" r="3.400" fill="#c6c6c6" stroke="none"/><circle cx="835.300" cy="297.500" r="3.400" fill="#c6c6c6" stroke="none"/><path d="M832.300 294.500L830.500 297.500H834.100Z" fill="#38373a" stroke="none"/><circle cx="858.600" cy="85.300" r="5.200" fill="#c6c6c6" stroke="none"/><path d="M856.500 61.500L860 63.200V67L856.500 68.800L853 67V63.200Z" fill="#c6c6c6" stroke="none"/><path d="M853 63.200L856.500 65L860 63.200M856.500 65V68.800" stroke="#38373a" stroke-width="0.700"/><path d="M862.500 62.500V64.500M862.500 66V68.500" stroke-width="1.800"/><rect x="853" y="70.500" width="11" height="3" fill="#c6c6c6" stroke="none"/></svg>
<span class="t" style="left:826.500px;top:316.500px;font-size:12.500px;color:#d4d4d4;letter-spacing:-0.500px;">A|</span>
<span class="t" style="left:828.500px;top:333.500px;font-size:12px;color:#d4d4d4;font-weight:bold;">¶</span>
<span class="t" style="left:857.300px;top:80.800px;font-size:9px;color:#38373a;font-weight:bold;font-family:'Liberation Serif',serif;">i</span>
<div class="abs" id="layers">
</div>
<svg class="abs" style="left:658px;top:241px" width="160" height="285" viewBox="658 241 160 285" fill="none" stroke="#cfcfcf" stroke-width="1.1"><rect x="658" y="241" width="160" height="285" fill="#1d1c1f" stroke="none"/><rect x="659.500" y="243" width="158.500" height="281.500" fill="#38373a" stroke="none"/><rect x="659.500" y="243" width="158.500" height="12" fill="#262527" stroke="none"/><rect x="680" y="244" width="23" height="11" fill="#38373a" stroke="none"/><path d="M791 246.500L794 249.200L791 252ZM794.500 246.500L797.500 249.200L794.500 252Z" fill="#c9c9c9" stroke="none"/><path d="M801.500 245V253.500" stroke="#4a494c" stroke-width="1"/><path d="M805.500 248H809L807.200 250.300Z" fill="#c9c9c9" stroke="none"/><path d="M810 247H815.500M810 249.200H815.500M810 251.400H815.500" stroke="#c9c9c9" stroke-width="1.300"/><rect x="663.500" y="257.500" width="45" height="12" rx="2" fill="#434245" stroke="#252426" stroke-width="1"/><circle cx="670.500" cy="262.500" r="2" stroke-width="1"/><path d="M669.200 264L667.500 266.300" stroke-width="1.100"/><path d="M701 262.300H704.600L702.800 259.800ZM701 263.700H704.600L702.800 266.200Z" fill="#c8c8c8" stroke="none"/><rect x="723" y="258.500" width="9" height="8" stroke-width="1"/><path d="M724 265.500L726.500 262.500L728.500 264.500L729.500 263.500L731 265.500Z" fill="#cfcfcf" stroke="none"/><circle cx="742.700" cy="262.500" r="3.700" stroke-width="1.100"/><path d="M740.100 265.100A3.700 3.700 0 0 0 745.300 259.900Z" fill="#cfcfcf" stroke="none"/><path d="M771 259H778.500V266.500H771Z" stroke-width="1"/><path d="M770 258h2v2h-2zM777.500 258h2v2h-2zM770 265.500h2v2h-2zM777.500 265.500h2v2h-2z" fill="#cfcfcf" stroke="none"/><path d="M787.500 258.500H791.500L793.500 260.500V266.500H787.500Z" fill="#cfcfcf" stroke="none"/><rect x="786" y="263" width="4" height="4" fill="#cfcfcf" stroke="#38373a" stroke-width="0.700"/><rect x="810" y="258.500" width="5.500" height="10.500" rx="1" fill="#262527" stroke="#1d1c1f" stroke-width="0.800"/><rect x="810.700" y="259.200" width="4.100" height="4.500" fill="#77767a" stroke="none"/><rect x="663.500" y="275.500" width="71" height="12.500" rx="2" fill="#434245" stroke="#252426" stroke-width="1"/><path d="M727.500 281H731.100L729.300 278.500ZM727.500 282.400H731.100L729.300 284.900Z" fill="#c8c8c8" stroke="none"/><rect x="778.500" y="275.500" width="23.500" height="12.500" fill="#29282b" stroke="#222123" stroke-width="1"/><rect x="803.500" y="275.500" width="11.500" height="12.500" rx="1.500" fill="#434245" stroke="#252426" stroke-width="1"/><path d="M807.300 280.800H811.300L809.300 283.300Z" fill="#d0d0d0" stroke="none"/><rect x="778.500" y="294.500" width="23.500" height="12.500" fill="#29282b" stroke="#222123" stroke-width="1"/><rect x="803.500" y="294.500" width="11.500" height="12.500" rx="1.500" fill="#434245" stroke="#252426" stroke-width="1"/><path d="M807.300 299.800H811.300L809.300 302.300Z" fill="#d0d0d0" stroke="none"/><rect x="689" y="298" width="7" height="7" stroke-width="0.900"/><path d="M689 298h2.300v2.300h-2.300zM693.600 298h2.400v2.300h-2.400zM691.300 300.300h2.300v2.400h-2.300zM689 302.700h2.300v2.300h-2.300zM693.600 302.700h2.400v2.300h-2.400z" fill="#cfcfcf" stroke="none"/><path d="M712.500 296L707.500 302" stroke-width="1.500" stroke-linecap="round"/><path d="M707.500 301.500C706 301.500 706 303.500 704 304.500C706 305.500 708.500 304.500 708.500 302.500Z" fill="#cfcfcf" stroke="none"/><path d="M720.700 296.500V306M716 301.300H725.500M719.200 298L720.700 296.300L722.200 298M719.200 304.500L720.700 306.200L722.200 304.500M717.500 299.800L715.800 301.300L717.500 302.800M724 299.800L725.700 301.300L724 302.800" stroke-width="0.900"/><rect x="733" y="300.500" width="6" height="5" fill="#cfcfcf" stroke="none"/><path d="M734.300 300.500V298.800C734.300 296.800 737.700 296.800 737.700 298.800V300.500" stroke-width="1.100"/><rect x="659.500" y="311" width="158.500" height="198.500" fill="#2b2a2d" stroke="none"/><rect x="809" y="311" width="9" height="198.500" fill="#323134" stroke="none"/><rect x="659.500" y="312" width="149.500" height="23.500" fill="#4a5572" stroke="none"/><rect x="659.500" y="312" width="19" height="23.500" fill="#2c2b2e" stroke="none"/><rect x="659.500" y="336.500" width="149.500" height="21.500" fill="#353437" stroke="none"/><rect x="659.500" y="336.500" width="19" height="21.500" fill="#2c2b2e" stroke="none"/><path d="M659.500 336H809M659.500 358.500H809" stroke="#242325" stroke-width="1"/><path d="M664.800 323.2C667 319.8 671.600 319.8 673.800 323.2C671.600 326.6 667 326.6 664.800 323.2Z" stroke-width="0.900" stroke="#cfcfcf"/><circle cx="669.300" cy="323.2" r="1.500" fill="#cfcfcf" stroke="none"/><path d="M664.800 346.5C667 343.1 671.600 343.1 673.800 346.5C671.600 349.9 667 349.9 664.800 346.5Z" stroke-width="0.900" stroke="#cfcfcf"/><circle cx="669.300" cy="346.5" r="1.500" fill="#cfcfcf" stroke="none"/><rect x="682.0" y="313.5" width="21.5" height="20.0" fill="#ffffff" stroke="#d8d8d8" stroke-width="1"/><ellipse cx="693.0" cy="318.8" rx="5.400" ry="5" fill="#e6c088" stroke="none"/><ellipse cx="692.0" cy="321.5" rx="3.800" ry="5" fill="#f1caa8" stroke="none"/><path d="M690.5 325.5L695.4 325.5L696.0 329.0L699.8 333.0L684.8 333.0L689.8 329.0Z" fill="#ecbf9e" stroke="none"/><path d="M682.5 333.0L683.5 330.5L688.2 329.5L690.8 333.0Z" fill="#f4f0ee" stroke="none"/><path d="M703.0 333.0L702.0 331.5L698.2 330.5L697.2 333.0Z" fill="#f4f0ee" stroke="none"/><rect x="682.0" y="337.5" width="21.5" height="18.5" fill="#ffffff" stroke="#8a898c" stroke-width="1"/><ellipse cx="693.0" cy="342.8" rx="5.400" ry="5" fill="#e6c088" stroke="none"/><ellipse cx="692.0" cy="345.5" rx="3.800" ry="5" fill="#f1caa8" stroke="none"/><path d="M690.5 349.5L695.4 349.5L696.0 353.0L699.8 355.5L684.8 355.5L689.8 353.0Z" fill="#ecbf9e" stroke="none"/><path d="M682.5 355.5L683.5 354.5L688.2 353.5L690.8 355.5Z" fill="#f4f0ee" stroke="none"/><path d="M703.0 355.5L702.0 355.5L698.2 354.5L697.2 355.5Z" fill="#f4f0ee" stroke="none"/><rect x="790.500" y="346" width="6" height="4.600" stroke-width="0.900"/><path d="M791.800 346V344.500C791.800 342.700 795.200 342.700 795.200 344.500V346" stroke-width="0.900"/><rect x="659.500" y="509.500" width="158.500" height="15" fill="#38373a" stroke="none"/><path d="M659.500 509.500H818" stroke="#242325" stroke-width="1"/><g stroke="#7b7a7d" stroke-width="1"><rect x="683.500" y="513.500" width="5" height="3.400" rx="1.700"/><rect x="687.500" y="513.500" width="5" height="3.400" rx="1.700"/></g><rect x="720" y="511.500" width="8.500" height="7.500" fill="#cfcfcf" stroke="none"/><circle cx="724.200" cy="515.200" r="2.100" fill="#38373a" stroke="none"/><circle cx="742" cy="515.200" r="3.600" stroke-width="1.100"/><path d="M739.500 517.800A3.600 3.600 0 0 0 744.500 512.600Z" fill="#cfcfcf" stroke="none"/><path d="M746.500 518.500L748.500 518.500L747.500 520Z" fill="#cfcfcf" stroke="none"/><path d="M756 512H759.500L760.500 513.200H764.500V519H756Z" fill="#cfcfcf" stroke="none"/><path d="M774 511.500H781.500V519H776.500L774 516.500Z" fill="#cfcfcf" stroke="none"/><path d="M774 516.500H776.500V519" stroke="#38373a" stroke-width="0.800"/><path d="M792 513H798.800M794.300 513V511.800H796.500V513" stroke-width="1"/><path d="M792.600 514H798.200L797.600 519.500H793.200Z" fill="#cfcfcf" stroke="none"/><path d="M794.400 515V518.500M796.400 515V518.500" stroke="#38373a" stroke-width="0.600"/><path d="M816.500 512L811 518.500M816.500 515L813.500 518.500" stroke="#5a595c" stroke-width="0.800"/><path d="M732 523.500H744" stroke="#555457" stroke-width="1"/></svg>
<span class="t" style="left:665px;top:246px;font-size:7.5px;color:#77767a;">3D</span>
<span class="t" style="left:683.5px;top:245.5px;font-size:7.5px;color:#e0e0e0;">图层</span>
<span class="t" style="left:708.5px;top:245.5px;font-size:7.5px;color:#8a898c;">通道</span>
<span class="t" style="left:677px;top:259.5px;font-size:8px;color:#d8d8d8;">类型</span>
<span class="t" style="left:755px;top:256.5px;font-size:11.5px;color:#d4d4d4;font-family:'Liberation Serif',serif;font-weight:bold;">T</span>
<span class="t" style="left:668px;top:277.5px;font-size:8px;color:#d8d8d8;">正常</span>
<span class="t" style="left:740.5px;top:277.5px;font-size:8px;color:#d8d8d8;">不透明度:</span>
<span class="t" style="left:780.5px;top:278px;font-size:8px;color:#e0e0e0;">100%</span>
<span class="t" style="left:663.5px;top:297px;font-size:8px;color:#d8d8d8;">锁定:</span>
<span class="t" style="left:757.5px;top:297px;font-size:8px;color:#d8d8d8;">填充:</span>
<span class="t" style="left:780.5px;top:297px;font-size:8px;color:#e0e0e0;">100%</span>
<span class="t" style="left:708.5px;top:319.5px;font-size:8px;color:#e6e6e6;">图层 1</span>
<span class="t" style="left:710px;top:342.5px;font-size:8px;color:#e0e0e0;font-style:italic;font-weight:bold;">背景</span>
<span class="t" style="left:702px;top:510px;font-size:9.5px;color:#d4d4d4;font-family:'Liberation Serif',serif;font-style:italic;font-weight:bold;letter-spacing:-0.500px;">fx</span>
<svg class="abs" style="left:560px;top:300px" width="260" height="140" viewBox="560 300 260 140">
<path d="M648.800 356.300L668.300 343.300" stroke="#c4524c" stroke-width="1.800" fill="none"/>
<path d="M574.600 430.300L630 368L625.700 363.700L648.800 356.300L640.800 379.400L636.400 374.400Z" fill="#fb3636"/>
<rect x="649.500" y="308.500" width="161.500" height="30" fill="none" stroke="#fa3838" stroke-width="7"/>
</svg>
</body>
</html>
